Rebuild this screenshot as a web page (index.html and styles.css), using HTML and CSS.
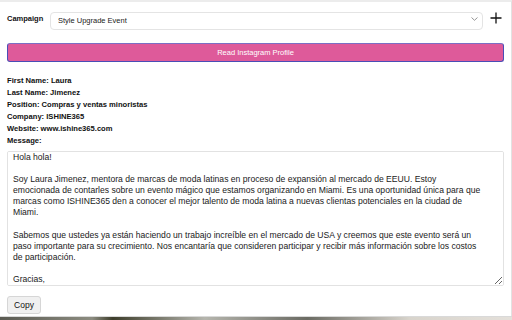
FILE: index.html
```html
<!DOCTYPE html>
<html lang="es">
<head>
    <meta charset="UTF-8">
    <title>Instagram Outreach</title>
    <link rel="stylesheet" href="styles.css">
</head>
<body>
    <div class="popup">
        <div class="campaign-row">
            <label class="field-label" for="campaign">Campaign</label>
            <div class="select-wrap">
                <select id="campaign">
                    <option>Style Upgrade Event</option>
                </select>
                <svg class="chevron" width="7" height="4" viewBox="0 0 7 4">
                    <path d="M0.5 0.5 L3.5 3.3 L6.5 0.5" fill="none" stroke="#8a8a8a" stroke-width="0.9"/>
                </svg>
            </div>
            <button class="add-btn" title="Add campaign">
                <svg width="12" height="12" viewBox="0 0 12 12">
                    <path d="M6 0.5 V11.5 M0.5 6 H11.5" stroke="#111" stroke-width="1.3"/>
                </svg>
            </button>
        </div>

        <button class="read-btn">Read Instagram Profile</button>

        <div class="profile">
            <p>First Name: Laura</p>
            <p>Last Name: Jimenez</p>
            <p>Position: Compras y ventas minoristas</p>
            <p>Company: ISHINE365</p>
            <p>Website: www.ishine365.com</p>
            <p>Message:</p>
        </div>

        <textarea class="message">Hola hola!

Soy Laura Jimenez, mentora de marcas de moda latinas en proceso de expansión al mercado de EEUU. Estoy
emocionada de contarles sobre un evento mágico que estamos organizando en Miami. Es una oportunidad única para que
marcas como ISHINE365 den a conocer el mejor talento de moda latina a nuevas clientas potenciales en la ciudad de
Miami.

Sabemos que ustedes ya están haciendo un trabajo increíble en el mercado de USA y creemos que este evento será un
paso importante para su crecimiento. Nos encantaría que consideren participar y recibir más información sobre los costos
de participación.

Gracias,
Laura Jimenez</textarea>

        <button class="copy-btn">Copy</button>
    </div>
    <div class="page-edge"></div>
</body>
</html>
```

FILE: styles.css
```css
body {
    margin: 0;
    background: #ffffff;
    font-family: 'Liberation Sans', Arial, sans-serif;
    color: #111;
}

.popup {
    height: 316px;
    box-sizing: border-box;
    border-top: 2px solid #ececec;
    border-right: 1px solid #e2e2e2;
    padding: 7px 7px 0 7px;
    display: flex;
    flex-direction: column;
}

.campaign-row {
    display: flex;
    align-items: center;
    height: 18px;
}

.field-label {
    font-size: 7.5px;
    font-weight: bold;
    width: 43px;
}

.select-wrap {
    position: relative;
    flex: 1;
    height: 18px;
}

.select-wrap select {
    appearance: none;
    width: 100%;
    height: 18px;
    box-sizing: border-box;
    border: 1px solid #e4e4e4;
    border-radius: 4px;
    background: #fff;
    padding: 0 0 0 7px;
    font-family: 'Liberation Sans', Arial, sans-serif;
    font-size: 7.5px;
    color: #222;
}

.chevron {
    position: absolute;
    right: 5px;
    top: 8px;
}

.add-btn {
    width: 20px;
    height: 18px;
    margin-left: 1px;
    padding: 0 0 0 6px;
    border: none;
    background: none;
    display: flex;
    align-items: center;
}

.read-btn {
    margin-top: 16px;
    height: 19px;
    border: 1px solid #4a4db6;
    border-top-color: #7a6fc4;
    border-radius: 3px;
    background: #de5a9a;
    color: #fff;
    font-family: 'Liberation Sans', Arial, sans-serif;
    font-size: 7.5px;
}

.profile {
    margin-top: 13px;
}

.profile p {
    margin: 0;
    font-size: 7.6px;
    font-weight: bold;
    line-height: 12px;
}

.message {
    margin-top: 4px;
    height: 135px;
    box-sizing: border-box;
    border: 1px solid #e2e2e2;
    border-radius: 2px;
    padding: 0 2px 0 5px;
    font-family: 'Liberation Sans', Arial, sans-serif;
    font-size: 8.6px;
    line-height: 11.1px;
    color: #1a1a1a;
    scrollbar-width: none;
    resize: vertical;
}

.message::-webkit-scrollbar {
    display: none;
}

.copy-btn {
    align-self: flex-start;
    margin-top: 10px;
    width: 34px;
    height: 18px;
    border: 1px solid #d6d6d6;
    border-radius: 3px;
    background: #f0f0f0;
    color: #111;
    font-family: 'Liberation Sans', Arial, sans-serif;
    font-size: 8.5px;
    padding: 0;
}

.page-edge {
    height: 4px;
    background: linear-gradient(90deg, #5a5a52 0%, #8c8c80 18%, #3e3e2c 22%, #b5b5ad 40%, #6b6b63 60%, #d8d4cc 80%, #e4e0da 100%);
    border-top: 1px solid #d9d9d9;
}
```
